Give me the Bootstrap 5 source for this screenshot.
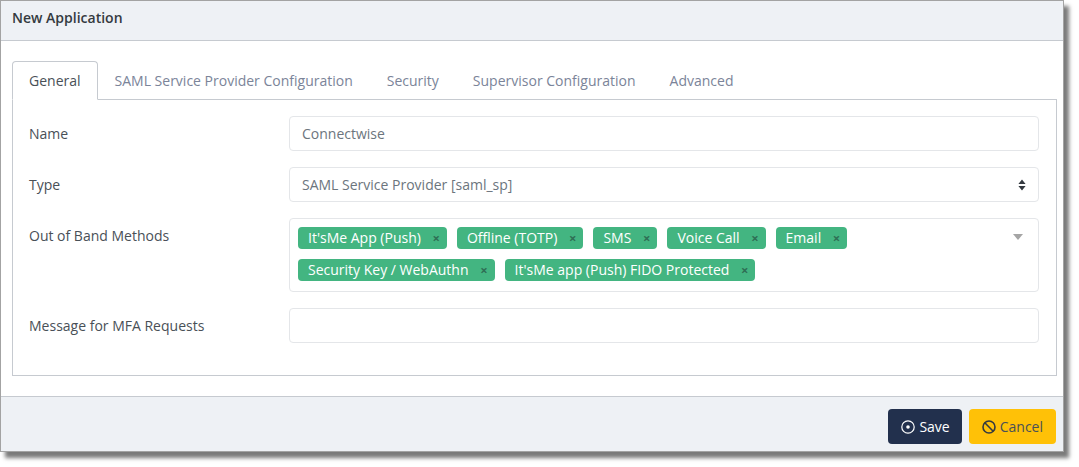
<!DOCTYPE html>
<html lang="en">
  <head>
    <meta charset="UTF-8" />
    <meta name="viewport" content="width=device-width, initial-scale=1.0" />
    <title>New Application</title>
    <link
      href="https://cdn.jsdelivr.net/npm/bootstrap@5.3.3/dist/css/bootstrap.min.css"
      rel="stylesheet"
    />
    <style>
      body {
        background-color: #ffffff;
        font-family: "Open Sans", "Noto Sans", sans-serif;
        font-size: 14px;
        color: #495057;
        padding-bottom: 15px;
      }
      .app-window {
        width: 1064px;
        height: 452px;
        border: 1px solid #a3a3a3;
        box-shadow: 5px 6px 4px #7a7a7a;
      }
      .app-head {
        height: 40px;
        padding: 0 11px;
        background-color: #eef1f5;
        border-bottom: 1px solid #c6cad0;
        font-size: 14px;
        font-weight: 600;
        color: #343a40;
        line-height: 34px;
      }
      .app-body {
        padding: 20px 6px 0 11px;
        height: 355px;
        flex: none;
      }
      .app-tabs {
        border-bottom: 1px solid #c6cad0;
        height: 39px;
      }
      .app-tabs .nav-link {
        padding: 0 16px;
        height: 39px;
        line-height: 38px;
        color: #7b8499;
        font-size: 14px;
        border: 1px solid transparent;
        border-radius: 4px 4px 0 0;
        margin-bottom: -1px;
      }
      .app-tabs .nav-link.active {
        color: #495057;
        background: #fff;
        border-color: #c6cad0 #c6cad0 #fff;
      }
      .app-pane {
        height: 276px;
        padding: 16px 16px 0 16px;
        border: 1px solid #c6cad0;
        border-top: 0;
      }
      .field-row {
        display: flex;
        margin-bottom: 16px;
      }
      .field-label {
        width: 260px;
        flex: none;
        padding-top: 7px;
        line-height: 21px;
        color: #495057;
      }
      .field-box {
        width: 750px;
        height: 35px;
        padding: 6px 12px;
        font-size: 14px;
        line-height: 21px;
        color: #6c757d;
        border: 1px solid #e4e6e9;
        border-radius: 4px;
      }
      .field-select {
        background-image: url("data:image/svg+xml,%3csvg xmlns='http://www.w3.org/2000/svg' viewBox='0 0 8 12'%3e%3cpath fill='%23343a40' d='M4 0.5L7.6 5H0.4zM4 11.5L0.4 7H7.6z'/%3e%3c/svg%3e");
        background-position: right 12px center;
        background-size: 8px 12px;
      }
      .tag-box {
        height: 74px;
        padding: 8px 0 0 8px;
        position: relative;
      }
      .tag-list {
        display: flex;
        flex-wrap: wrap;
        gap: 10px;
        width: 680px;
      }
      .tag-pill {
        display: inline-flex;
        align-items: center;
        justify-content: space-between;
        height: 22px;
        padding: 0 7px 0 10px;
        gap: 11.6px;
        background-color: #43b581;
        color: #fff;
        border-radius: 4px;
        font-size: 14px;
        line-height: 22px;
      }
      .tag-x {
        color: #2f6f55;
        font-size: 13px;
        font-weight: 700;
      }
      .tag-caret {
        position: absolute;
        right: 15px;
        top: 15px;
        width: 0;
        height: 0;
        border-left: 5px solid transparent;
        border-right: 5px solid transparent;
        border-top: 6px solid #a5a5a5;
      }
      .app-foot {
        height: 55px;
        padding: 12px 7px 0 0;
        background-color: #eef1f5;
        border-top: 1px solid #c6cad0;
        gap: 7px;
      }
      .act-btn {
        height: 35px;
        padding: 0 13px;
        font-size: 14px;
        border-radius: 4px;
        border: 0;
        gap: 4px;
      }
      .act-save {
        padding-right: 12px;
        background-color: #22304d;
        color: #fff;
      }
      .act-cancel {
        background-color: #ffc107;
        color: #495057;
      }
    </style>
  </head>
  <body class="m-0">
    <div class="app-window d-flex flex-column bg-white">
      <!-- Title -->
      <div class="app-head">New Application</div>

      <div class="app-body">
        <!-- Tabs -->
        <ul class="nav app-tabs">
          <li class="nav-item"><a class="nav-link active" href="#">General</a></li>
          <li class="nav-item"><a class="nav-link" href="#">SAML Service Provider Configuration</a></li>
          <li class="nav-item"><a class="nav-link" href="#">Security</a></li>
          <li class="nav-item"><a class="nav-link" href="#">Supervisor Configuration</a></li>
          <li class="nav-item"><a class="nav-link" href="#">Advanced</a></li>
        </ul>

        <div class="app-pane">
          <div class="field-row">
            <div class="field-label">Name</div>
            <input class="form-control field-box" type="text" value="Connectwise" />
          </div>
          <div class="field-row">
            <div class="field-label">Type</div>
            <select class="form-select field-box field-select">
              <option>SAML Service Provider [saml_sp]</option>
            </select>
          </div>
          <div class="field-row">
            <div class="field-label">Out of Band Methods</div>
            <div class="field-box tag-box">
              <div class="tag-list">
                <span class="tag-pill">It'sMe App (Push)<span class="tag-x">×</span></span>
                <span class="tag-pill">Offline (TOTP)<span class="tag-x">×</span></span>
                <span class="tag-pill">SMS<span class="tag-x">×</span></span>
                <span class="tag-pill">Voice Call<span class="tag-x">×</span></span>
                <span class="tag-pill">Email<span class="tag-x">×</span></span>
                <span class="tag-pill">Security Key / WebAuthn<span class="tag-x">×</span></span>
                <span class="tag-pill">It'sMe app (Push) FIDO Protected<span class="tag-x">×</span></span>
              </div>
              <span class="tag-caret"></span>
            </div>
          </div>
          <div class="field-row">
            <div class="field-label">Message for MFA Requests</div>
            <input class="form-control field-box" type="text" />
          </div>
        </div>
      </div>

      <!-- Footer -->
      <div class="app-foot d-flex align-items-start justify-content-end">
        <button class="btn act-btn act-save d-inline-flex align-items-center" type="button">
          <svg width="14" height="14" viewBox="0 0 14 14" fill="none" stroke="#fff" stroke-width="1.2">
            <circle cx="7" cy="7" r="6.2" />
            <circle cx="7" cy="7" r="1.8" fill="#fff" stroke="none" />
          </svg>
          Save
        </button>
        <button class="btn act-btn act-cancel d-inline-flex align-items-center" type="button">
          <svg width="14" height="14" viewBox="0 0 14 14" fill="none" stroke="#343a40" stroke-width="1.6">
            <circle cx="7" cy="7" r="6" />
            <path d="M2.8 2.8l8.4 8.4" />
          </svg>
          Cancel
        </button>
      </div>
    </div>

    <script src="https://cdn.jsdelivr.net/npm/bootstrap@5.3.3/dist/js/bootstrap.bundle.min.js"></script>
  </body>
</html>
